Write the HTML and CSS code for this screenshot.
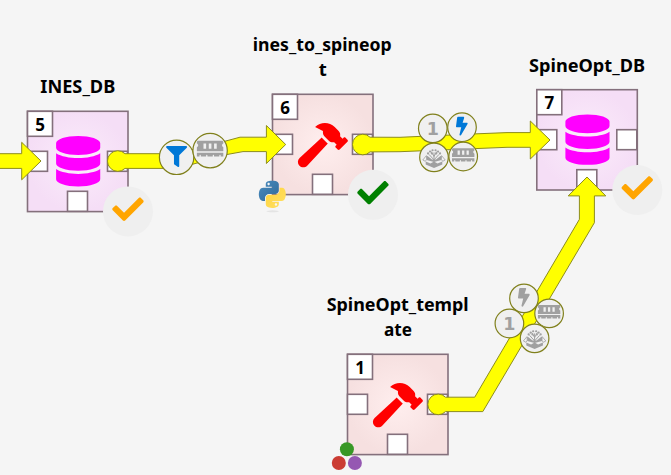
FILE: index.html
```html
<!DOCTYPE html>
<html lang="en">
<head>
<meta charset="utf-8">
<title>Workflow</title>
<link rel="stylesheet" href="styles.css">
</head>
<body>
<svg class="canvas" viewBox="0 0 671 475" width="671" height="475">
  <defs>
    <radialGradient id="store-fill"><stop offset="0" stop-color="#fbecfb"/><stop offset="1" stop-color="#f5def6"/></radialGradient>
    <radialGradient id="tool-fill"><stop offset="0" stop-color="#ffeeee"/><stop offset="1" stop-color="#f6e0e0"/></radialGradient>
    <linearGradient id="py-blue" x1="0" y1="0" x2="1" y2="1"><stop offset="0" stop-color="#4a8cc0"/><stop offset="1" stop-color="#306998"/></linearGradient>
    <linearGradient id="py-yellow" x1="0" y1="0" x2="1" y2="1"><stop offset="0" stop-color="#ffd43b"/><stop offset="1" stop-color="#ffe066"/></linearGradient>
    <g id="ports" class="port">
      <rect x="0" y="0" width="25" height="25"/>
      <rect x="0" y="40" width="20" height="20"/>
      <rect x="40" y="80" width="20" height="20"/>
      <rect x="80" y="40" width="20" height="20"/>
    </g>
    <path id="database" transform="translate(28.6 24.7) scale(.0985)" d="M448 73.143v45.714C448 159.143 347.667 192 224 192S0 159.143 0 118.857V73.143C0 32.857 100.333 0 224 0s224 32.857 224 73.143zM448 176v102.857C448 319.143 347.667 352 224 352S0 319.143 0 278.857V176c48.125 33.143 136.208 48.572 224 48.572S399.874 209.143 448 176zm0 160v102.857C448 479.143 347.667 512 224 512S0 479.143 0 438.857V336c48.125 33.143 136.208 48.572 224 48.572S399.874 369.143 448 336z"/>
    <path id="hammer" transform="translate(25.4 28.6) scale(.0868)" d="M571.31 193.94l-22.63-22.63c-6.25-6.25-16.38-6.25-22.63 0l-11.31 11.31-28.9-28.9c5.63-21.31.36-44.9-16.35-61.61l-45.25-45.25c-62.48-62.48-163.79-62.48-226.28 0l90.51 45.25v18.75c0 16.97 6.74 33.25 18.75 45.25l49.14 49.14c16.71 16.71 40.3 21.98 61.61 16.35l28.9 28.9-11.31 11.31c-6.25 6.25-6.25 16.38 0 22.63l22.63 22.63c6.25 6.25 16.38 6.25 22.63 0l90.51-90.51c6.23-6.24 6.23-16.37-.02-22.62zm-286.72-15.2c-3.7-3.7-6.84-7.79-9.85-11.95L19.64 404.96c-25.57 23.88-26.26 64.19-1.53 88.93s65.05 24.05 88.92-1.53l238.13-255.07c-3.96-2.91-7.9-5.87-11.44-9.41l-49.13-49.14z"/>
    <g id="status">
      <circle class="status-disc" r="25"/>
      <path transform="translate(-15.7 -17.8) scale(.0612)" d="M173.898 439.404l-166.4-166.4c-9.997-9.997-9.997-26.206 0-36.204l36.203-36.204c9.997-9.998 26.207-9.998 36.204 0L192 312.69 432.095 72.596c9.997-9.997 26.207-9.997 36.204 0l36.203 36.204c9.997 9.997 9.997 26.206 0 36.204l-294.4 294.401c-9.998 9.997-26.207 9.997-36.204-.001z"/>
    </g>
    <path id="filter" transform="translate(-10.5 -11.3) scale(.041)" d="M487.976 0H24.028C2.71 0-8.047 25.866 7.058 40.971L192 225.941V432c0 7.831 3.821 15.17 10.237 19.662l80 55.98C298.02 518.69 320 507.493 320 487.98V225.941l184.947-184.97C520.021 25.896 509.338 0 487.976 0z"/>
    <path id="bolt" transform="translate(-6 -10.4) scale(.0365)" d="M296 160H180.6l42.6-129.8C227.2 15 215.7 0 200 0H56C44 0 33.8 8.9 32.2 20.8l-32 240C-1.7 275.2 9.5 288 24 288h118.7L96.6 482.5c-3.6 15.2 8 29.5 23.3 29.5 8.4 0 16.4-4.4 20.8-12l176-304c9.3-15.9-2.2-36-20.7-36z"/>
    <path id="memory" transform="translate(-11.2 -10.6) scale(.035)" d="M640 130.94V96c0-17.67-14.33-32-32-32H32c-17.67 0-32 14.33-32 32v34.94c18.6 6.61 32 24.19 32 45.06s-13.4 38.45-32 45.06V320h640v-98.94c-18.6-6.61-32-24.19-32-45.06s13.4-38.45 32-45.06zM224 256h-64V128h64v128zm128 0h-64V128h64v128zm128 0h-64V128h64v128zM0 448h64v-26.67c0-8.84 7.16-16 16-16s16 7.16 16 16V448h128v-26.67c0-8.84 7.16-16 16-16s16 7.16 16 16V448h128v-26.67c0-8.84 7.16-16 16-16s16 7.16 16 16V448h128v-26.67c0-8.84 7.16-16 16-16s16 7.16 16 16V448h64v-96H0v96z"/>
    <g id="package">
      <path class="twig" d="M0 4V-5M0 2.500L-5-3M0 2.500L5-3M0-1L-3-6M0-1L3-6"/>
      <path class="leaf" d="M-6-4h.1M-4-5.8h.1M-1.500-7.200h.1M1.500-7.200h.1M4-5.800h.1M6-4h.1M-2.200-4h.1M2.200-4h.1"/>
      <path d="M-8.300 4L-3.500 6 0 4.200 3.500 6 8.300 4V7L0 10.500-8.300 7zM-7.500-1.500L-6.500-1.500-2 2.200 2 2.200 6.500-1.500 7.500-1.500V2.500L0 4.500-7.500 2.500z"/>
      <path class="flap" d="M-7.600-1.800L-11.200 2.600-8.600 3.900-7.400 1.800zM7.600-1.800L11.200 2.600 8.600 3.900 7.400 1.800z"/>
    </g>
  </defs>

  <g class="node" transform="translate(27.5 111.3)">
    <rect class="box store" width="100.5" height="100.3"/><use href="#ports"/>
    <use class="magenta" href="#database"/><text class="order" x="12.5" y="19.7">5</text>
  </g>
  <g class="node" transform="translate(272.5 94.3)">
    <rect class="box tool" width="100.5" height="100.3"/><use href="#ports"/>
    <use class="red" href="#hammer"/><text class="order" x="12.5" y="19.7">6</text>
  </g>
  <g class="node" transform="translate(536.8 89.7)">
    <rect class="box store" width="100.5" height="100.3"/><use href="#ports"/>
    <use class="magenta" href="#database"/><text class="order" x="12.5" y="19.7">7</text>
  </g>
  <g class="node" transform="translate(347.5 354.3)">
    <rect class="box tool" width="100.5" height="100.3"/><use href="#ports"/>
    <use class="red" href="#hammer"/><text class="order" x="12.5" y="19.7">1</text>
  </g>

  <g class="link">
    <path d="M-2 153.7H21.7V142.3L41 161 21.7 179.8V168.4H-2z"/>
    <path d="M125 153.7H177L227 140.7 240 137.2H266.4V125.5L285.7 144.5 266.4 163.5V151.6H243L227 154.5 178 168.4H125A10.3 10.3 0 1 1 125 153.7z"/>
    <path d="M370 137.2L400 137.3 477 133.8 507 132.6H530.3V121L550 140 530.3 159V147.3H507L400 151.7 370 151.9A10.3 10.3 0 1 1 370 137.2z"/>
    <path d="M445.5 397.2H474.7L579.4 219.3V195.9H568.2L587 177 605.8 195.9H594.4V222.7L482.8 411.6H445.5A10.3 10.3 0 1 1 445.5 397.2z"/>
  </g>

  <use class="warn" href="#status" x="128" y="211.4"/>
  <use class="ok" href="#status" x="373" y="194.8"/>
  <use class="warn" href="#status" x="637.3" y="190"/>

  <g transform="translate(176.6 157.3)"><circle class="ring" r="17.2"/><use class="blue" href="#filter"/></g>
  <g transform="translate(210.1 150.6)"><circle class="ring" r="17.2"/><g transform="scale(1.18)"><use class="gray" href="#memory"/></g></g>

  <g transform="translate(432.8 128.4)"><circle class="ring" r="14.3"/><text class="count" y="6.6">1</text></g>
  <g transform="translate(462 127.2)"><circle class="ring" r="14.3"/><use class="blue" href="#bolt"/></g>
  <g transform="translate(434 157.4)"><circle class="ring" r="14.3"/><use class="gray" href="#package"/></g>
  <g transform="translate(463.2 156.5)"><circle class="ring" r="14.3"/><use class="gray" href="#memory"/></g>

  <g transform="translate(524 298.4)"><circle class="ring" r="14.3"/><use class="gray" href="#bolt"/></g>
  <g transform="translate(549.1 313.4)"><circle class="ring" r="14.3"/><use class="gray" href="#memory"/></g>
  <g transform="translate(509.4 323.5)"><circle class="ring" r="14.3"/><text class="count" y="6.6">1</text></g>
  <g transform="translate(534.6 338.4)"><circle class="ring" r="14.3"/><use class="gray" href="#package"/></g>

  <g transform="translate(258.8 180.7) scale(.243)">
    <ellipse class="shade" cx="57" cy="126" rx="26" ry="4"/>
    <path fill="url(#py-blue)" d="M54.9 0c-4.6 0-9 .4-12.8 1.1C30.8 3.1 28.7 7.3 28.7 15v10.3h26.8v3.4H18.7c-7.8 0-14.6 4.7-16.7 13.6-2.5 10.2-2.6 16.6 0 27.3 1.9 7.9 6.5 13.6 14.3 13.6h9.2V70.9c0-8.8 7.7-16.6 16.7-16.6H69c7.4 0 13.4-6.1 13.4-13.6V15.1c0-7.3-6.1-12.7-13.4-13.9C64.4.4 59.5 0 54.9 0zM40.4 8.2c2.8 0 5 2.3 5 5.1s-2.2 5.1-5 5.1-5-2.3-5-5.1 2.2-5.1 5-5.1z"/>
    <path fill="url(#py-yellow)" d="M85.6 28.7v11.9c0 9.2-7.8 17-16.7 17H42.2c-7.3 0-13.4 6.3-13.4 13.6v25.5c0 7.3 6.3 11.5 13.4 13.6 8.5 2.5 16.6 3 26.8 0 6.7-2 13.4-5.9 13.4-13.6V86.5H55.6v-3.4h40.2c7.8 0 10.7-5.4 13.4-13.6 2.8-8.4 2.7-16.5 0-27.3-1.9-7.7-5.6-13.6-13.4-13.6zM70.6 93.3c2.8 0 5 2.3 5 5.1s-2.2 5.1-5 5.1-5-2.3-5-5.1 2.2-5.1 5-5.1z"/>
  </g>
  <circle cx="346.9" cy="449.2" r="7" fill="#389826"/>
  <circle cx="338.8" cy="463" r="7" fill="#cb3c33"/>
  <circle cx="354.9" cy="463" r="7" fill="#9558b2"/>

  <g class="title">
    <text x="77.8" y="93" textLength="75" lengthAdjust="spacingAndGlyphs">INES_DB</text>
    <text x="322.3" y="51" textLength="139" lengthAdjust="spacingAndGlyphs">ines_to_spineop</text>
    <text x="322.8" y="75.5">t</text>
    <text x="587" y="72" textLength="116" lengthAdjust="spacingAndGlyphs">SpineOpt_DB</text>
    <text x="397.7" y="310.5" textLength="142" lengthAdjust="spacingAndGlyphs">SpineOpt_templ</text>
    <text x="398" y="335.5" textLength="28" lengthAdjust="spacingAndGlyphs">ate</text>
  </g>
</svg>
</body>
</html>
```
FILE: styles.css
```css
body { margin: 0; background: #f5f5f5; overflow: hidden; }
.canvas { display: block; font-family: "Noto Sans", "Open Sans", sans-serif; }
text { text-anchor: middle; }
.box, .port { stroke: #84707c; stroke-width: 1.6; }
.box.store { fill: url(#store-fill); }
.box.tool { fill: url(#tool-fill); }
.port { fill: #fff; }
.order { font-size: 17px; font-weight: 700; }
.title { font-size: 18.5px; font-weight: 700; }
.magenta { fill: #f0f; }
.red { fill: #f00; }
.link path { fill: #ff0; stroke: #8c8c1e; stroke-width: 1; }
.status-disc { fill: #efefef; }
.warn { fill: #ffa500; }
.ok { fill: #008000; }
.ring { fill: #f0f0f0; stroke: #80801c; stroke-width: 1.2; }
.blue { fill: #0078d7; }
.gray { fill: #a0a0a0; stroke: none; }
.count { fill: #a0a0a0; font-family: "DejaVu Sans", sans-serif; font-size: 17.5px; font-weight: 700; }
.flap { fill: #f4f4f4; stroke: #a0a0a0; stroke-width: .8; }
.twig { fill: none; stroke: #a0a0a0; stroke-width: 1; }
.leaf { fill: none; stroke: #a0a0a0; stroke-width: 2.1; stroke-linecap: round; }
.shade { fill: #e4e4e4; }
```
